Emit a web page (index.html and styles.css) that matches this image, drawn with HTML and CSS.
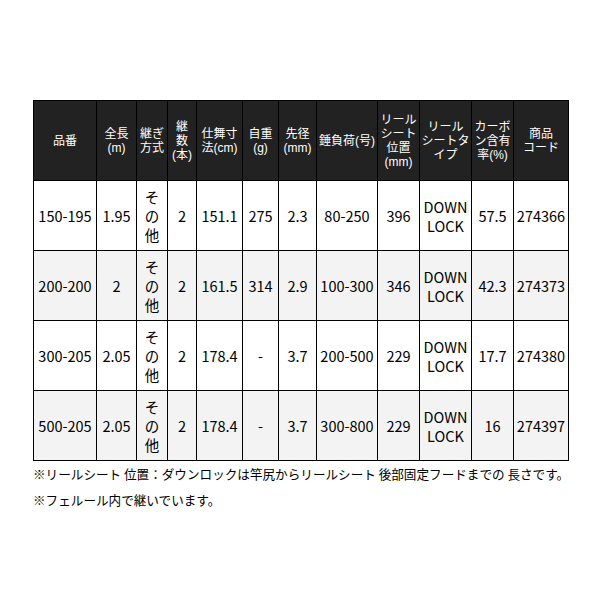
FILE: index.html
```html
<!DOCTYPE html>
<html lang="ja">
<head>
<meta charset="utf-8">
<title>スペック表</title>
<link rel="stylesheet" href="styles.css">
</head>
<body>
<div class="page">
  <table class="spec">
    <colgroup>
      <col class="c1"><col class="c2"><col class="c3"><col class="c4"><col class="c5"><col class="c6">
      <col class="c7"><col class="c8"><col class="c9"><col class="c10"><col class="c11"><col class="c12">
    </colgroup>
    <thead>
      <tr>
        <th>品番</th>
        <th>全長<br>(m)</th>
        <th>継ぎ<br>方式</th>
        <th>継<br>数<br>(本)</th>
        <th>仕舞寸<br>法(cm)</th>
        <th>自重<br>(g)</th>
        <th>先径<br>(mm)</th>
        <th>錘負荷(号)</th>
        <th>リール<br>シート<br>位置<br>(mm)</th>
        <th>リール<br>シートタ<br>イプ</th>
        <th>カーボ<br>ン含有<br>率(%)</th>
        <th>商品<br>コード</th>
      </tr>
    </thead>
    <tbody>
      <tr>
        <td>150-195</td><td>1.95</td><td>そ<br>の<br>他</td><td>2</td><td>151.1</td><td>275</td><td>2.3</td><td>80-250</td><td>396</td><td>DOWN<br>LOCK</td><td>57.5</td><td>274366</td>
      </tr>
      <tr class="alt">
        <td>200-200</td><td>2</td><td>そ<br>の<br>他</td><td>2</td><td>161.5</td><td>314</td><td>2.9</td><td>100-300</td><td>346</td><td>DOWN<br>LOCK</td><td>42.3</td><td>274373</td>
      </tr>
      <tr>
        <td>300-205</td><td>2.05</td><td>そ<br>の<br>他</td><td>2</td><td>178.4</td><td>-</td><td>3.7</td><td>200-500</td><td>229</td><td>DOWN<br>LOCK</td><td>17.7</td><td>274380</td>
      </tr>
      <tr class="alt">
        <td>500-205</td><td>2.05</td><td>そ<br>の<br>他</td><td>2</td><td>178.4</td><td>-</td><td>3.7</td><td>300-800</td><td>229</td><td>DOWN<br>LOCK</td><td>16</td><td>274397</td>
      </tr>
    </tbody>
  </table>
  <p class="note">※リールシート 位置：ダウンロックは竿尻からリールシート 後部固定フードまでの 長さです。</p>
  <p class="note">※フェルール内で継いでいます。</p>
</div>
</body>
</html>
```

FILE: styles.css
```css
html, body {
  margin: 0;
  padding: 0;
  background: #ffffff;
}

.page {
  padding: 100px 0 0 33px;
  font-family: "Noto Sans CJK JP", "Noto Sans", sans-serif;
  color: #000000;
}

.spec {
  border-collapse: collapse;
  table-layout: fixed;
  width: 535px;
}

.c1 { width: 63px; }
.c2 { width: 40px; }
.c3 { width: 31px; }
.c4 { width: 29px; }
.c5 { width: 46px; }
.c6 { width: 36px; }
.c7 { width: 38px; }
.c8 { width: 61px; }
.c9 { width: 42px; }
.c10 { width: 52px; }
.c11 { width: 42px; }
.c12 { width: 55px; }

.spec th,
.spec td {
  border: 1px solid #000000;
  padding: 0;
  text-align: center;
  vertical-align: middle;
  overflow: hidden;
  white-space: nowrap;
}

.spec th {
  background: #222222;
  color: #ffffff;
  font-family: "Liberation Sans", "Noto Sans CJK JP", sans-serif;
  font-weight: normal;
  font-size: 12px;
  line-height: 14px;
  height: 79px;
}

.spec td {
  background: #ffffff;
  font-size: 14.5px;
  line-height: 19px;
  height: 69px;
}

.spec tr.alt td {
  background: #f3f3f3;
}

.note {
  margin: 0;
  font-size: 12.6px;
  line-height: 26px;
  white-space: nowrap;
}
```
